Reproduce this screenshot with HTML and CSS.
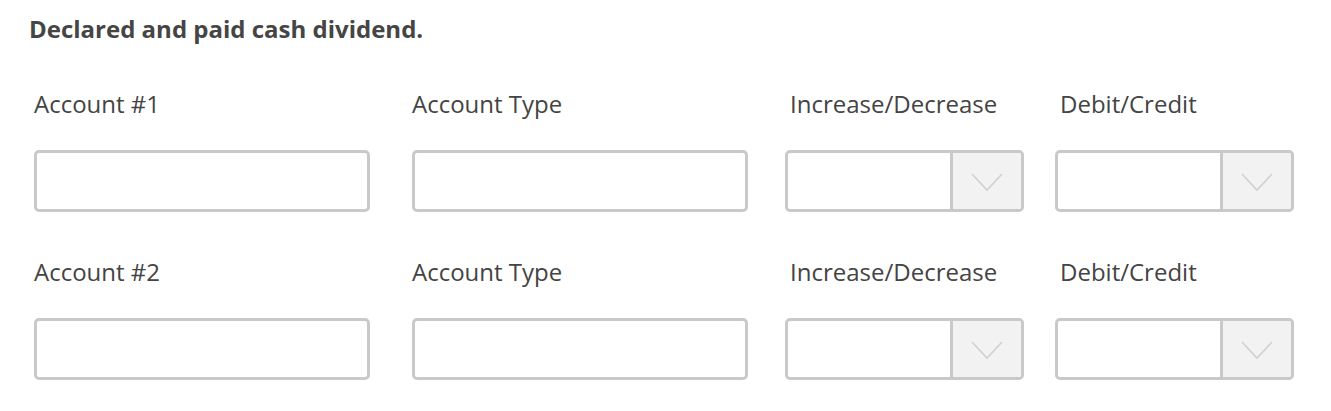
FILE: index.html
```html
<!DOCTYPE html>
<html>
<head>
<meta charset="utf-8">
<link rel="stylesheet" href="styles.css">
</head>
<body>
<div class="page">
  <h1 class="title">Declared and paid cash dividend.</h1>
  <div class="row">
    <div class="field f1"><div class="label">Account #1</div><div class="box text"></div></div>
    <div class="field f2"><div class="label">Account Type</div><div class="box text"></div></div>
    <div class="field f3"><div class="label">Increase/Decrease</div><div class="box select"><span class="val"></span><span class="arrow"><svg width="32" height="19" viewBox="0 0 32 19"><path d="M1 1 L16 17 L31 1" fill="none" stroke="#d0d0d0" stroke-width="1.6"/></svg></span></div></div>
    <div class="field f4"><div class="label">Debit/Credit</div><div class="box select"><span class="val"></span><span class="arrow"><svg width="32" height="19" viewBox="0 0 32 19"><path d="M1 1 L16 17 L31 1" fill="none" stroke="#d0d0d0" stroke-width="1.6"/></svg></span></div></div>
  </div>
  <div class="row">
    <div class="field f1"><div class="label">Account #2</div><div class="box text"></div></div>
    <div class="field f2"><div class="label">Account Type</div><div class="box text"></div></div>
    <div class="field f3"><div class="label">Increase/Decrease</div><div class="box select"><span class="val"></span><span class="arrow"><svg width="32" height="19" viewBox="0 0 32 19"><path d="M1 1 L16 17 L31 1" fill="none" stroke="#d0d0d0" stroke-width="1.6"/></svg></span></div></div>
    <div class="field f4"><div class="label">Debit/Credit</div><div class="box select"><span class="val"></span><span class="arrow"><svg width="32" height="19" viewBox="0 0 32 19"><path d="M1 1 L16 17 L31 1" fill="none" stroke="#d0d0d0" stroke-width="1.6"/></svg></span></div></div>
  </div>
</div>
</body>
</html>
```
FILE: styles.css
```css
html, body {
  margin: 0;
  padding: 0;
  background: #ffffff;
}
.page {
  font-family: "Open Sans", "Liberation Sans", sans-serif;
  color: #444444;
  padding: 13px 0 0 34px;
}
.title {
  margin: 0 0 0 -5px;
  font-size: 24px;
  font-weight: 700;
  line-height: 32px;
  color: #454545;
}
.row {
  display: grid;
  grid-template-columns: 378px 373px 270px 239px;
  margin-top: 43px;
}
.row + .row {
  margin-top: 44px;
}
.label {
  font-size: 24px;
  line-height: 32px;
  height: 32px;
  color: #444444;
}
.f3 .label, .f4 .label {
  padding-left: 5px;
}
.box {
  margin-top: 30px;
  height: 62px;
  box-sizing: border-box;
  border: 3px solid #c9c9c9;
  border-radius: 5px;
  background: #ffffff;
}
.text {
  width: 336px;
}
.select {
  width: 239px;
  display: flex;
}
.val {
  flex: 1;
}
.arrow {
  width: 68px;
  border-left: 3px solid #c9c9c9;
  background: #f2f2f2;
  display: flex;
  align-items: center;
  justify-content: center;
  border-radius: 0 2px 2px 0;
}
.arrow svg {
  display: block;
  margin-top: 2px;
}
```
